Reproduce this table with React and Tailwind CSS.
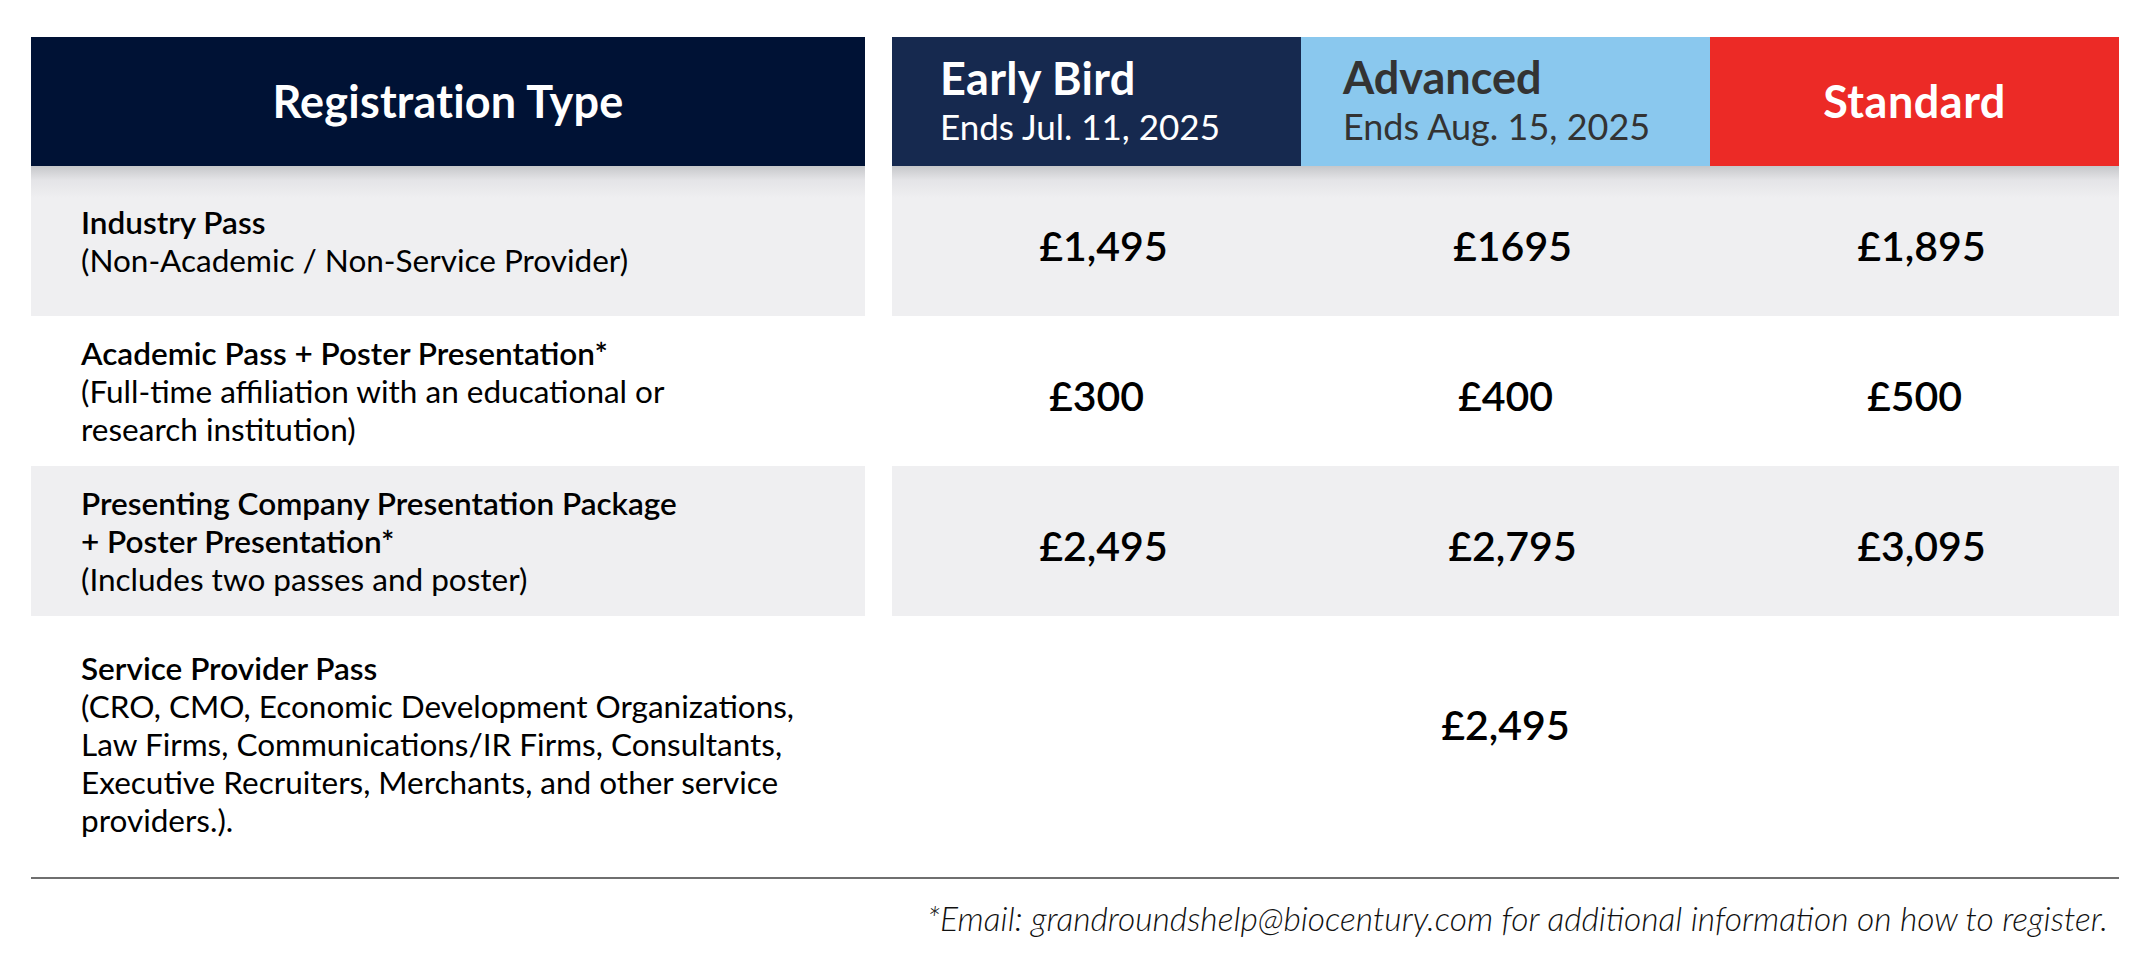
import React from "react";

const rows = [
  {
    title: ["Industry Pass"],
    sub: ["(Non-Academic / Non-Service Provider)"],
    prices: ["£1,495", "£1695", "£1,895"],
    gray: true,
    first: true,
    shift: "pl-[14px]",
  },
  {
    title: ["Academic Pass + Poster Presentation*"],
    sub: ["(Full-time affiliation with an educational or", "research institution)"],
    prices: ["£300", "£400", "£500"],
    shift: "pl-[0px]",
  },
  {
    title: ["Presenting Company Presentation Package", "+ Poster Presentation*"],
    sub: ["(Includes two passes and poster)"],
    prices: ["£2,495", "£2,795", "£3,095"],
    gray: true,
    shift: "pl-[14px]",
  },
];

const Cell = ({ gray, first, className = "", children }) => (
  <div
    className={
      (first
        ? "bg-[linear-gradient(to_bottom,#c6c7ca_0px,#e4e4e7_14px,#efeff1_32px)] "
        : gray
        ? "bg-[#efeff1] "
        : "bg-white ") + className
    }
  >
    {children}
  </div>
);

export default function App() {
  return (
    <div
      className="min-h-screen bg-white pt-[37px] pl-[31px] text-black"
      style={{ fontFamily: "Lato, 'Open Sans', sans-serif" }}
    >
      <div className="w-[2088px]">
        {/* header */}
        <div className="flex gap-[27px] h-[129px]">
          <div className="w-[834px] bg-[#001235] flex items-center justify-center">
            <span className="text-white font-bold text-[45px] tracking-[0.2px]">Registration Type</span>
          </div>
          <div className="flex flex-1">
            <div className="w-[409px] bg-[#16294f] flex flex-col justify-center pl-[48px] text-white">
              <span className="font-bold text-[45px] leading-[48px] tracking-[0.3px]">Early Bird</span>
              <span className="text-[35px] leading-[48px]">Ends Jul. 11, 2025</span>
            </div>
            <div className="w-[409px] bg-[#8ac8ee] flex flex-col justify-center pl-[42px] text-[#333333]">
              <span className="font-bold text-[45px] leading-[48px]">Advanced</span>
              <span className="text-[36px] leading-[50px]">Ends Aug. 15, 2025</span>
            </div>
            <div className="w-[409px] bg-[#ec2a26] flex items-center justify-center text-white">
              <span className="font-bold text-[45px] tracking-[0.5px]">Standard</span>
            </div>
          </div>
        </div>

        {rows.map((r, i) => (
          <div key={i} className="flex gap-[27px] h-[150px]">
            <Cell
              gray={r.gray}
              first={r.first}
              className="w-[834px] flex flex-col justify-center pl-[50px] text-[31.5px] leading-[38px]"
            >
              {r.title.map((t) => (
                <span key={t} className="font-semibold">{t}</span>
              ))}
              {r.sub.map((t) => (
                <span key={t}>{t}</span>
              ))}
            </Cell>
            <div className="flex flex-1">
              {r.prices.map((p) => (
                <Cell
                  key={p}
                  gray={r.gray}
                  first={r.first}
                  className={"w-[409px] flex items-center justify-center pt-[10px] font-semibold text-[41px] " + r.shift}
                >
                  {p}
                </Cell>
              ))}
            </div>
          </div>
        ))}

        <div className="flex gap-[27px] h-[261px]">
          <div className="w-[834px] flex flex-col pt-[33px] pl-[50px] text-[31.5px] leading-[38px]">
            <span className="font-semibold">Service Provider Pass</span>
            <span>(CRO, CMO, Economic Development Organizations,</span>
            <span>Law Firms, Communications/IR Firms, Consultants,</span>
            <span>Executive Recruiters, Merchants, and other service</span>
            <span>providers.).</span>
          </div>
          <div className="flex flex-1 justify-center pt-[84px]">
            <span className="font-semibold text-[41px] leading-[50px]">£2,495</span>
          </div>
        </div>

        <div className="h-[2px] bg-[#6f6f6f]" />

        <p className="text-right pr-[11px] pt-[14px] italic font-light text-[33.6px] text-[#111]">
          *Email: grandroundshelp@biocentury.com for additional information on how to register.
        </p>
      </div>
    </div>
  );
}
